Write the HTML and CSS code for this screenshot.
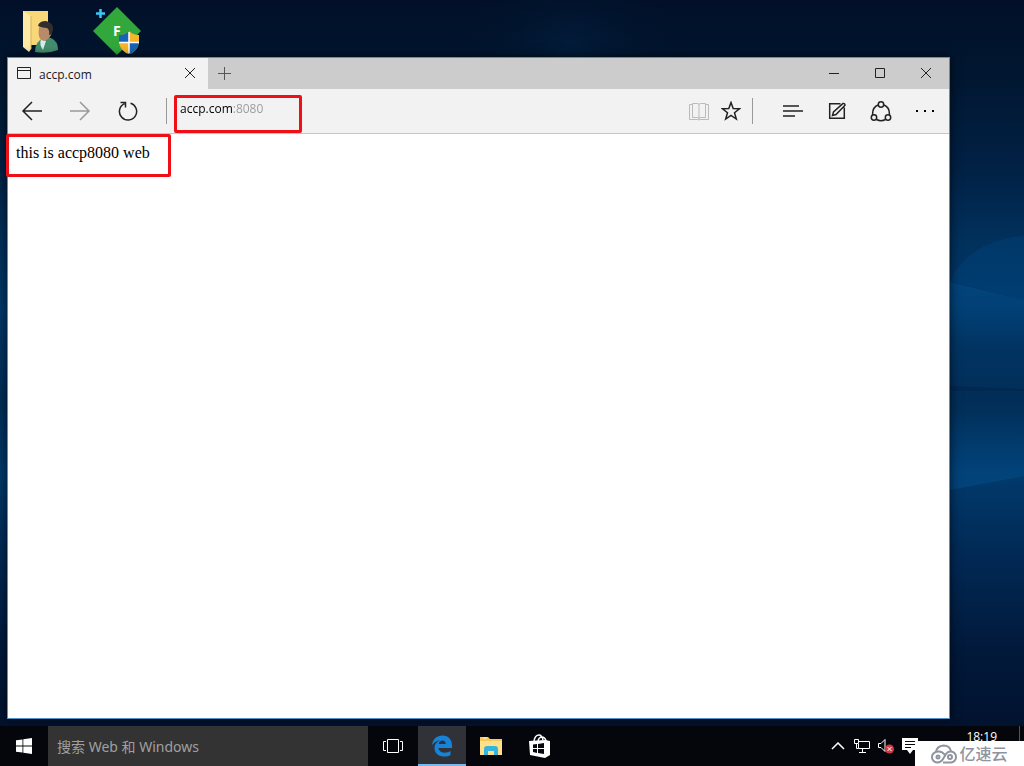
FILE: index.html
```html
<!DOCTYPE html>
<html lang="zh-CN">
<head>
<meta charset="utf-8">
<meta name="viewport" content="width=device-width, initial-scale=1">
<title>accp.com</title>
<link rel="stylesheet" href="styles.css">
</head>
<body>
<div class="desktop">
  <svg class="wallpaper" viewBox="0 0 1024 766" preserveAspectRatio="none" aria-hidden="true">
    <defs>
      <linearGradient id="sky" x1="0" y1="0" x2="0" y2="1">
        <stop offset="0" stop-color="#011028"/><stop offset=".1" stop-color="#011731"/>
        <stop offset=".22" stop-color="#012145"/><stop offset=".31" stop-color="#01305b"/>
        <stop offset=".4" stop-color="#01396b"/><stop offset=".52" stop-color="#012e58"/>
        <stop offset=".62" stop-color="#013a6c"/><stop offset=".72" stop-color="#012a56"/>
        <stop offset=".85" stop-color="#01193b"/><stop offset="1" stop-color="#010f28"/>
      </linearGradient>
      <linearGradient id="upper" x1="0" y1="0" x2="0" y2="1">
        <stop offset="0" stop-color="#00508e" stop-opacity=".55"/><stop offset="1" stop-color="#00508e" stop-opacity="0"/>
      </linearGradient>
      <linearGradient id="lower" x1="0" y1="0" x2="0" y2="1">
        <stop offset="0" stop-color="#00508e" stop-opacity="0"/><stop offset="1" stop-color="#00508e" stop-opacity=".5"/>
      </linearGradient>
      <radialGradient id="glow"><stop offset="0" stop-color="#02284c"/><stop offset="1" stop-color="#011028" stop-opacity="0"/></radialGradient>
    </defs>
    <rect width="1024" height="766" fill="url(#sky)"/>
    <ellipse cx="570" cy="45" rx="120" ry="90" fill="url(#glow)" opacity=".4"/>
    <path d="M950 281Q970 240 1024 236V300Z" fill="#00508e" opacity=".25"/>
    <path d="M950 282L1024 300V345H950Z" fill="url(#upper)"/>
    <path d="M950 386L1024 389V391H950Z" fill="#001f42" opacity=".4"/>
    <path d="M950 410H1024V476L950 490Z" fill="url(#lower)"/>
  </svg>

  <main class="workspace">
    <div class="shortcuts">
      <button class="shortcut" aria-label="User folder">
        <svg width="40" height="46" viewBox="0 0 40 46">
          <path d="M5 3h25v34H5z" fill="#f7d777"/><path d="M5 3l8 5v33l-2 3-6-5z" fill="#ffe9a6"/>
          <path d="M13 8v33" stroke="#d9b352" fill="none"/>
          <path d="M17 44q0-11 9-14h7q7 3 7 12-10 4-23 2z" fill="#438d6e"/>
          <path d="M23 31l5 2-3 9q-4-5-2-11z" fill="#d9ebe7"/>
          <path d="M21 20q-2 12 5 13 7-2 8-10l-2-7-9-1z" fill="#b98a6a"/>
          <path d="M20 18q1-5 8-5 8 2 7 9-1 5-4 5 1-5-2-7-4 0-9-2z" fill="#302e2e"/>
        </svg>
      </button>
      <button class="shortcut" aria-label="Fiddler">
        <svg width="50" height="50" viewBox="0 0 50 50">
          <path d="M25 1l24 24-24 24L1 25z" fill="#32a83c"/>
          <path d="M8.500 3v9M4 7.500h9" stroke="#37c8f4" stroke-width="2.500"/>
          <text class="shortcut-letter" x="21" y="30">F</text>
          <path d="M37 25q4 4 10 4v8q-2 9-10 11-8-2-10-11v-8q6 0 10-4z" fill="#f7b52b"/>
          <path d="M37 37h10q-2 9-10 11zM37 25v12H27v-8q6 0 10-4z" fill="#1764b5"/>
          <path d="M37 26v21M27 36.500h20" stroke="#fff" stroke-width="1.500"/>
        </svg>
      </button>
    </div>

    <section class="window" aria-label="Browser">
      <header class="tabs">
        <div class="tab">
          <svg width="14" height="12" viewBox="0 0 14 12" class="line"><path d="M.5.5h13v11H.5zM.5 3.500h13"/></svg>
          <span class="tab-title">accp.com</span>
          <button class="tab-close" aria-label="Close tab"><svg width="12" height="12" viewBox="0 0 12 12" class="line"><path d="M1 1l10 10M11 1L1 11"/></svg></button>
        </div>
        <button class="tab-new" aria-label="New tab"><svg width="13" height="13" viewBox="0 0 13 13" class="line mid"><path d="M6.500 0v13M0 6.500h13"/></svg></button>
        <div class="controls">
          <button class="control" aria-label="Minimize"><svg width="12" height="12" viewBox="0 0 12 12" class="line"><path d="M1 6.500h10"/></svg></button>
          <button class="control" aria-label="Maximize"><svg width="12" height="12" viewBox="0 0 12 12" class="line"><path d="M1.500 1.500h9v9h-9z"/></svg></button>
          <button class="control" aria-label="Close"><svg width="12" height="12" viewBox="0 0 12 12" class="line"><path d="M1 1l10 10M11 1L1 11"/></svg></button>
        </div>
      </header>

      <form class="toolbar">
        <button type="button" class="nav" aria-label="Back"><svg width="22" height="20" viewBox="0 0 22 20" class="line bold"><path d="M21 10H2M11 1l-9 9 9 9"/></svg></button>
        <button type="button" class="nav" aria-label="Forward"><svg width="22" height="20" viewBox="0 0 22 20" class="line pale"><path d="M1 10h19M11 1l9 9-9 9"/></svg></button>
        <button type="button" class="nav" aria-label="Refresh"><svg width="20" height="20" viewBox="0 0 20 20" class="line bold"><path d="M12.500 2.200A8.600 8.600 0 1 1 6.500 2.600M2.500 1.500H7.500v5"/></svg></button>
        <span class="divider first"></span>
        <div class="address-box">
          <input class="address" type="text" aria-label="Address" value="accp.com:8080">
          <span class="mark mark-address"></span>
        </div>
        <button type="button" class="small" aria-label="Reading view"><svg width="20" height="19" viewBox="0 0 20 19" class="line faint"><path d="M3.500 1.500h5q1.500 0 1.500 1 0-1 1.500-1h5v14h-5q-1.500 0-1.500 1 0-1-1.500-1h-5zM10 2v15M3.500 2.500H.5v15h8.500l1 .5 1-.5h8.500v-15h-3"/></svg></button>
        <button type="button" class="small" aria-label="Favorite"><svg width="20" height="20" viewBox="0 0 20 20" class="line bold"><path d="M10 1.500l2.200 6.100 6.300.2-5 3.900 1.800 6.300-5.300-3.700L4.700 18l1.800-6.300-5-3.900 6.300-.2z"/></svg></button>
        <span class="divider"></span>
        <button type="button" class="tool hub" aria-label="Hub"><svg width="22" height="14" viewBox="0 0 22 14" class="line bold"><path d="M1 2h16M1 7h20M1 12h12"/></svg></button>
        <button type="button" class="tool" aria-label="Web note"><svg width="18" height="18" viewBox="0 0 18 18" class="line bold"><path d="M12.500 1.700H1.700v14.600h14.600V5.500M4.500 13.500l1-3.500 9.500-8.500q2-.5 2 1.800L8 12.500z"/></svg></button>
        <button type="button" class="tool" aria-label="Share"><svg width="22" height="21" viewBox="0 0 22 21" class="line bold"><circle cx="11" cy="3.500" r="2.700"/><circle cx="4" cy="16.500" r="2.700"/><circle cx="18" cy="16.500" r="2.700"/><path d="M8 4Q2 6.500 2.700 14M14 4q6 2.500 5.300 10M6.500 18.500q4.500 2.500 9 0"/></svg></button>
        <button type="button" class="tool" aria-label="More"><svg width="20" height="4" viewBox="0 0 20 4"><path d="M1 1h2v2H1zM9 1h2v2H9zM17 1h2v2h-2z"/></svg></button>
      </form>

      <article class="page">
        <p class="page-text">this is accp8080 web</p>
        <span class="mark mark-page"></span>
      </article>
    </section>
  </main>

  <footer class="taskbar">
    <button class="task" aria-label="Start"><svg width="16" height="16" viewBox="0 0 16 16" fill="#fff"><path d="M0 2.300L6.500 1.400v6.200H0zM7.300 1.300L16 0v7.600H7.300zM0 8.400h6.500v6.200L0 13.700zM7.300 8.400H16V16l-8.700-1.300z"/></svg></button>
    <input class="search" type="text" aria-label="搜索" placeholder="搜索 Web 和 Windows">
    <div class="apps">
      <button class="task" aria-label="Task view"><svg width="20" height="14" viewBox="0 0 20 14" class="line white"><path d="M4.500.5h11v13h-11zM3 2.500H.5v9H3M17 2.500h2.500v9H17"/></svg></button>
      <button class="task active" aria-label="Edge"><svg width="22" height="22" viewBox="0 0 22 22" fill="#1683d8"><path d="M1 10.500C1.500 4 6 .5 11.500.5 18 .5 21 5 21 10.500V13H7.500c.5 5 7 6 12 3v4.200c-6 3-16 1.300-16-7.200C3.500 9 6 6.500 9 5.500 5.500 5.500 2.500 8 1 10.500zM7.600 9h7.200c0-5-6.700-4.500-7.200 0z"/></svg></button>
      <button class="task" aria-label="File explorer"><svg width="22" height="20" viewBox="0 0 22 20"><path d="M0 1h8l2 2h12v16H0z" fill="#f5c85b"/><path d="M0 5h22v14H0z" fill="#ffe08a"/><path d="M3 2h4" stroke="#fff2c0"/><path d="M4 19v-6q0-3 3-3h8q3 0 3 3v6h-4v-4H8v4z" fill="#36b5dc"/></svg></button>
      <button class="task" aria-label="Store"><svg width="22" height="24" viewBox="0 0 22 24"><path d="M5 7q1-6 5-6 3 0 4 5M9 7q1-4 4-4 3 0 4 4" fill="none" stroke="#fff" stroke-width="1.500"/><path d="M0 7l16-1 5 1v14l-5 3-15-3z" fill="#fff"/><path d="M4 10.500l4-.5v4H4zM9 10l6-1v5H9zM4 15h4v4l-4-1zM9 15h6v5l-6-1z" fill="#05070c"/></svg></button>
    </div>
    <div class="tray">
      <button class="tray-item" aria-label="Show hidden icons"><svg width="14" height="8" viewBox="0 0 14 8" class="line white bold"><path d="M1 7l6-6 6 6"/></svg></button>
      <button class="tray-item" aria-label="Network"><svg width="16" height="14" viewBox="0 0 16 14" class="line white"><path d="M5 2.500h10.500v7H4.500V5M8.500 10v3M5 13.500h7M.5.500h4v4h-4zM2.500 5v4.500h2"/></svg></button>
      <button class="tray-item" aria-label="Volume muted"><svg width="18" height="16" viewBox="0 0 18 16" class="line white"><path d="M1.500 5.500H4l4-4v12l-4-4H1.500z"/><circle cx="12.500" cy="11" r="4.500" fill="#d13a44" stroke="none"/><path d="M10.500 9l4 4M14.500 9l-4 4"/></svg></button>
      <button class="tray-item" aria-label="Notifications"><svg width="16" height="16" viewBox="0 0 16 16"><path d="M0 0h16v12h-5l-3 4-3-4H0z" fill="#fff"/><path d="M3 3.500h10M3 6.500h10M3 9.500h6" stroke="#05070c"/></svg></button>
      <span class="language"></span>
      <time class="clock">18:19</time>
      <span class="show-desktop"></span>
    </div>
  </footer>

  <div class="watermark">
    <svg width="26" height="20" viewBox="0 0 26 20" fill="none" stroke="#8f949e" stroke-width="2"><path d="M5 8Q6 2 12.500 1.500 19 1.500 20 7.500"/><path d="M14 11q-3-4-7-3.500Q1 8.500 1 13t5 5.500q4 0 6-3.500l3-5q2-3 5-2.500 5 1 5 5.500t-5 5.500h-8"/><circle cx="7" cy="13" r="1.500"/><circle cx="19" cy="13" r="2"/></svg>
    <span>亿速云</span>
  </div>
</div>
</body>
</html>
```
FILE: styles.css
```css
* { box-sizing: border-box; }

body {
  margin: 0;
  font-family: "Open Sans", "Noto Sans", "Noto Sans CJK SC", sans-serif;
  font-size: 13px;
  color: #1a1a1a;
}

button {
  display: flex;
  align-items: center;
  justify-content: center;
  padding: 0;
  border: 0;
  background: none;
  font: inherit;
}

input { min-width: 0; border: 0; outline: 0; }
svg { flex: none; }

.line { fill: none; stroke: #222; stroke-width: 1; }
.bold { stroke-width: 1.5; }
.mid { stroke: #555; }
.pale { stroke: #999; stroke-width: 1.5; }
.faint { stroke: #bbb; }
.white { stroke: #fff; }

.desktop {
  position: relative;
  isolation: isolate;
  display: flex;
  flex-direction: column;
  min-height: 100vh;
}

.wallpaper {
  position: absolute;
  inset: 0;
  z-index: -1;
  width: 100%;
  height: 100%;
}

.workspace {
  flex: 1;
  display: flex;
  flex-direction: column;
  padding: 0 74px 7px 7px;
}

.shortcuts {
  display: flex;
  gap: 34px;
  padding: 5px 0 2px 11px;
}
.shortcut { height: 50px; padding-top: 1px; }
.shortcut-letter { fill: #fff; font-size: 14px; font-weight: 700; }

.window {
  flex: 1;
  display: flex;
  flex-direction: column;
  border: 1px solid #4f93c8;
  background: #fff;
  box-shadow: 0 0 10px #000a;
}

.tabs {
  display: flex;
  height: 31px;
  padding-bottom: 1px;
  background: #ccc;
}
.tab {
  display: flex;
  align-items: center;
  width: 200px;
  height: 31px;
  padding: 0 6px 2px 9px;
  gap: 8px;
  background: #f2f2f2;
}
.tab-title { flex: 1; font-size: 12px; padding-top: 4px; }
.tab-close { width: 24px; height: 24px; }
.tab-new { width: 33px; }
.controls { display: flex; margin-left: auto; }
.control { width: 46px; }

.toolbar {
  display: flex;
  align-items: center;
  height: 45px;
  padding-right: 2px;
  border-bottom: 1px solid #c6c6c6;
  background: #f2f2f2;
}
.nav { width: 48px; height: 44px; }
.small { width: 32px; height: 44px; }
.tool { width: 44px; height: 44px; }
.hub { margin-left: 18px; }
.divider { width: 1px; height: 26px; margin-left: 5px; background: #999; }
.divider.first { margin-left: 14px; }

.address-box { position: relative; flex: 1; }
.address {
  width: 100%;
  height: 28px;
  padding: 0 0 5px 13px;
  font-family: "Open Sans", "Noto Sans", sans-serif;
  font-size: 12px;
  background: linear-gradient(90deg, #000 66px, #999 66px) text;
  -webkit-text-fill-color: transparent;
}

.mark {
  position: absolute;
  border: 3px solid #ee1016;
  border-radius: 2px;
  pointer-events: none;
}
.mark-address { left: 7px; top: -2px; width: 128px; height: 38px; }

.page { position: relative; flex: 1; padding: 10px 8px; }
.page-text {
  margin: 0;
  font: 16px/18px "Liberation Serif", serif;
  color: #000;
}
.mark-page { left: -2px; top: 0; width: 165px; height: 43px; }

.taskbar {
  display: flex;
  height: 40px;
  background: #04060b;
}
.task { width: 48px; height: 40px; }
.search {
  flex: 0 1 320px;
  padding: 0 9px;
  background: #333;
  color: #fff;
  font-family: "Noto Sans", "Noto Sans CJK SC", sans-serif;
  font-size: 14px;
}
.search::placeholder { color: #a0a0a0; opacity: 1; }
.apps { display: flex; gap: 1px; padding-left: 1px; }
.active { padding-top: 2px; background: #303238; border-bottom: 2px solid #76b9ed; }

.tray {
  display: flex;
  align-items: center;
  margin-left: auto;
  padding-right: 4px;
}
.tray-item { width: 24px; height: 40px; }
.language { width: 1px; height: 8px; margin-left: 11px; background: #ddd; }
.clock {
  align-self: flex-start;
  margin: 5px 22px 0 32px;
  font-size: 12px;
  line-height: 12px;
  color: #fff;
}
.show-desktop { align-self: stretch; width: 1px; background: #555; }

.watermark {
  position: absolute;
  right: 0;
  bottom: 0;
  display: flex;
  align-items: center;
  justify-content: center;
  gap: 2px;
  width: 109px;
  height: 25px;
  background: #fff;
  color: #8f949e;
  font: 500 16px/24px "Noto Sans CJK SC", sans-serif;
}
.watermark span { line-height: 20px; padding-bottom: 2px; }
```
